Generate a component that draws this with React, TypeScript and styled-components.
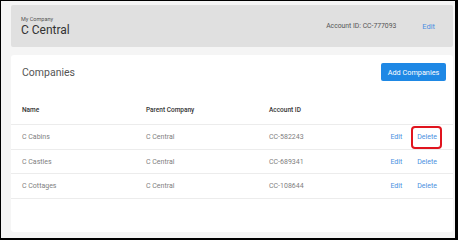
import React from "react";
import styled, { createGlobalStyle } from "styled-components";

const Global = createGlobalStyle`
  html, body { margin: 0; padding: 0; background: #ffffff; }
  body { font-family: Roboto, "Liberation Sans", Arial, sans-serif; }
  * { box-sizing: border-box; }
`;

const Frame = styled.div`
  width: 458px;
  height: 240px;
  border-style: solid;
  border-color: #000;
  border-width: 1px 3px 2px 1px;
  background: #f5f5f5;
  padding: 4px 2px 6px 10px;
  display: flex;
  flex-direction: column;
  gap: 8px;
  overflow: hidden;
`;

const CompanyBar = styled.div`
  height: 42px;
  background: #e0e0e0;
  border-radius: 2px;
  display: flex;
  align-items: center;
  padding: 0 18px 0 10px;
`;

const CompanyInfo = styled.div`
  display: flex;
  flex-direction: column;
  flex: 1;
  margin-top: 1px;
`;

const Eyebrow = styled.div`
  font-size: 5.5px;
  color: #555;
  line-height: 7px;
`;

const CompanyName = styled.div`
  font-size: 12px;
  color: #333;
  line-height: 14px;
`;

const AccountLabel = styled.div`
  font-size: 6.8px;
  color: #555;
  margin-right: 26px;
`;

const Link = styled.a<{ $size?: number }>`
  font-size: ${(p) => p.$size ?? 7}px;
  color: #4a8fe0;
  text-decoration: none;
  cursor: pointer;
`;

const Card = styled.div`
  flex: 1;
  background: #ffffff;
  border-radius: 3px;
  display: flex;
  flex-direction: column;
`;

const TitleRow = styled.div`
  display: flex;
  align-items: center;
  justify-content: space-between;
  padding: 8px 7px 0 11px;
  height: 26px;
`;

const Title = styled.h2`
  margin: 1px 0 0;
  font-size: 10.5px;
  font-weight: 400;
  color: #555;
`;

const AddButton = styled.button`
  width: 65px;
  height: 18px;
  border: none;
  border-radius: 2px;
  background: #1e88e5;
  color: #fff;
  font-family: inherit;
  font-size: 7.3px;
  padding: 0;
  cursor: pointer;
`;

const Table = styled.div`
  display: flex;
  flex-direction: column;
  margin-top: 18px;
`;

const Row = styled.div<{ $head?: boolean }>`
  display: grid;
  grid-template-columns: 124px 123px 1fr auto auto;
  align-items: center;
  height: ${(p) => (p.$head ? 26 : 24.6)}px;
  padding: ${(p) => (p.$head ? "0 16px 3px 11px" : "1px 16px 0 11px")};
  border-bottom: 1px solid #ececec;
  font-size: ${(p) => (p.$head ? 6.5 : 7)}px;
  font-weight: ${(p) => (p.$head ? 500 : 400)};
  color: ${(p) => (p.$head ? "#333" : "#808080")};
`;

const Cell = styled.div``;

const EditCell = styled.div`
  margin-right: 15px;
`;

const DeleteCell = styled.div<{ $highlight?: boolean }>`
  position: relative;
  ${(p) =>
    p.$highlight
      ? `
    &::after {
      content: "";
      position: absolute;
      left: -6px;
      right: -5px;
      top: -7px;
      bottom: -8px;
      border: 2px solid #e0141e;
      border-radius: 4px;
    }
  `
      : ""}
`;

const rows = [
  { name: "C Cabins", parent: "C Central", id: "CC-582243", hl: true },
  { name: "C Castles", parent: "C Central", id: "CC-689341", hl: false },
  { name: "C Cottages", parent: "C Central", id: "CC-108644", hl: false },
];

export default function App() {
  return (
    <>
      <Global />
      <Frame>
        <CompanyBar>
          <CompanyInfo>
            <Eyebrow>My Company</Eyebrow>
            <CompanyName>C Central</CompanyName>
          </CompanyInfo>
          <AccountLabel>Account ID: CC-777093</AccountLabel>
          <Link $size={7.5}>Edit</Link>
        </CompanyBar>
        <Card>
          <TitleRow>
            <Title>Companies</Title>
            <AddButton>Add Companies</AddButton>
          </TitleRow>
          <Table>
            <Row $head>
              <Cell>Name</Cell>
              <Cell>Parent Company</Cell>
              <Cell>Account ID</Cell>
              <Cell />
              <Cell />
            </Row>
            {rows.map((r) => (
              <Row key={r.name}>
                <Cell>{r.name}</Cell>
                <Cell>{r.parent}</Cell>
                <Cell>{r.id}</Cell>
                <EditCell>
                  <Link>Edit</Link>
                </EditCell>
                <DeleteCell $highlight={r.hl}>
                  <Link>Delete</Link>
                </DeleteCell>
              </Row>
            ))}
          </Table>
        </Card>
      </Frame>
    </>
  );
}
